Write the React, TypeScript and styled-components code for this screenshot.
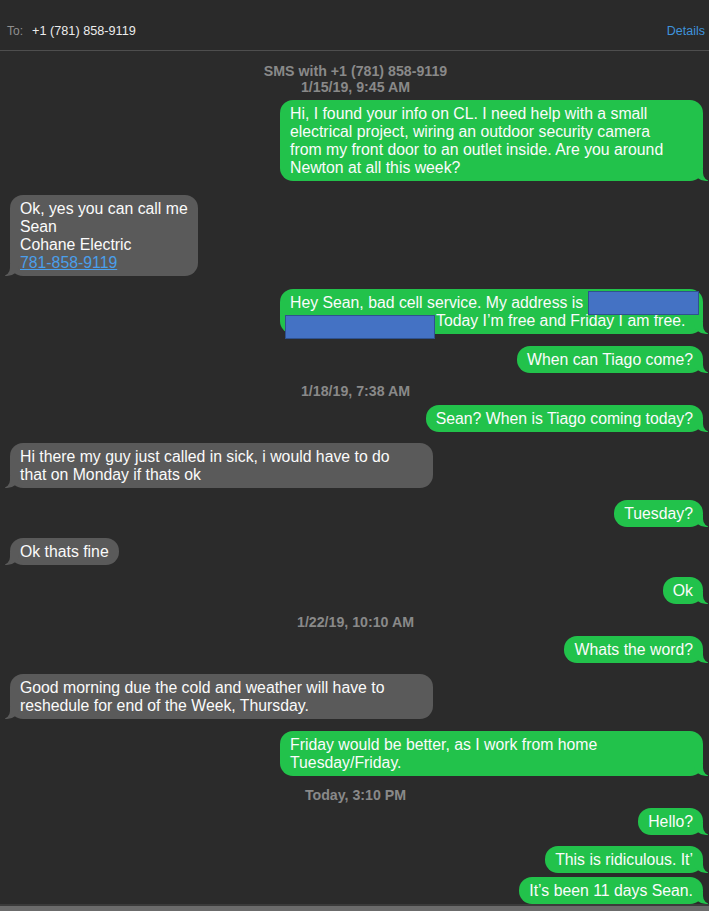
import { Fragment } from 'react';
import styled, { createGlobalStyle, css } from 'styled-components';

const BG = '#2b2b2b';
const GREEN = '#22c24b';
const GREY = '#5a5a5a';

const GlobalStyle = createGlobalStyle`
  html, body {
    margin: 0;
    padding: 0;
    background: ${BG};
  }
  * {
    box-sizing: border-box;
  }
`;

const Window = styled.div`
  width: 709px;
  height: 911px;
  display: flex;
  flex-direction: column;
  background: ${BG};
  font-family: 'Liberation Sans', Arial, sans-serif;
  overflow: hidden;
`;

const Header = styled.div`
  height: 51px;
  flex-shrink: 0;
  display: flex;
  align-items: center;
  padding: 12px 4px 0 7px;
  background: #2a2a2a;
  border-bottom: 1px solid #4e4e4e;
`;

const ToLabel = styled.span`
  font-size: 12px;
  color: #8f8f8f;
  margin-right: 9px;
`;

const ToNumber = styled.span`
  font-size: 12.7px;
  color: #ececec;
`;

const Details = styled.span`
  margin-left: auto;
  font-size: 12.5px;
  color: #3f93db;
`;

const Thread = styled.div`
  flex: 1;
  display: flex;
  flex-direction: column;
  padding: 0 6px 0 10px;
  overflow: hidden;
`;

const Stamp = styled.div<{ $top: number }>`
  margin-top: ${(p) => p.$top}px;
  text-align: center;
  font-size: 14.2px;
  line-height: 16px;
  font-weight: 700;
  color: #898989;
  padding-right: 2px;
  white-space: pre-line;
`;

const Row = styled.div<{ $me?: boolean; $top: number }>`
  margin-top: ${(p) => p.$top}px;
  display: flex;
  justify-content: ${(p) => (p.$me ? 'flex-end' : 'flex-start')};
`;

const Bubble = styled.div<{ $me?: boolean; $wide?: boolean }>`
  position: relative;
  max-width: 423px;
  ${(p) => p.$wide && 'width: 423px;'}
  padding: 5px 10px 4px;
  border-radius: 13px;
  font-size: 15.8px;
  line-height: 18px;
  color: #fbfbfb;
  white-space: pre-line;
  background: ${(p) => (p.$me ? GREEN : GREY)};

  &::before,
  &::after {
    content: '';
    position: absolute;
    bottom: 0;
    height: 12px;
  }

  ${(p) =>
    p.$me
      ? css`
          &::before {
            right: -5px;
            width: 14px;
            background: ${GREEN};
            border-bottom-left-radius: 12px 10px;
          }
          &::after {
            right: -10px;
            width: 10px;
            background: ${BG};
            border-bottom-left-radius: 8px;
          }
        `
      : css`
          &::before {
            left: -5px;
            width: 14px;
            background: ${GREY};
            border-bottom-right-radius: 12px 10px;
          }
          &::after {
            left: -10px;
            width: 10px;
            background: ${BG};
            border-bottom-right-radius: 8px;
          }
        `}
`;

const Link = styled.span`
  color: #4a9feb;
  text-decoration: underline;
`;

/* blue boxes pasted over the address in the screenshot */
const Redact = styled.span<{ $w: number; $m: string }>`
  display: inline-block;
  position: relative;
  z-index: 1;
  width: ${(p) => p.$w}px;
  height: 24px;
  margin: ${(p) => p.$m};
  vertical-align: baseline;
  background: #4472c4;
  border: 1.5px solid #2f528f;
`;

const Bottom = styled.div`
  height: 7px;
  flex-shrink: 0;
  border-top: 2px solid #3b3b3b;
  background: #6b6b6b;
`;

type Msg =
  | { kind: 'stamp'; top: number; text: string }
  | { kind: 'msg'; top: number; me?: boolean; wide?: boolean; text: React.ReactNode };

const messages: Msg[] = [
  { kind: 'stamp', top: 12, text: 'SMS with +1 (781) 858-9119\n1/15/19, 9:45 AM' },
  {
    kind: 'msg',
    top: 5,
    me: true,
    wide: true,
    text: 'Hi, I found your info on CL. I need help with a small\nelectrical project, wiring an outdoor security camera\nfrom my front door to an outlet inside. Are you around\nNewton at all this week?',
  },
  {
    kind: 'msg',
    top: 14,
    text: (
      <>
        {'Ok, yes you can call me\nSean\nCohane Electric\n'}
        <Link>781-858-9119</Link>
      </>
    ),
  },
  {
    kind: 'msg',
    top: 13,
    me: true,
    wide: true,
    text: (
      <>
        {'Hey Sean, bad cell service. My address is '}
        <Redact $w={111} $m="-3px -20px -7px 0" />
        {'\n'}
        <Redact $w={150} $m="0 1px -13px -5px" />
        {'Today I\u2019m free and Friday I am free.'}
      </>
    ),
  },
  { kind: 'msg', top: 12, me: true, text: 'When can Tiago come?' },
  { kind: 'stamp', top: 10, text: '1/18/19, 7:38 AM' },
  { kind: 'msg', top: 6, me: true, text: 'Sean? When is Tiago coming today?' },
  {
    kind: 'msg',
    top: 11,
    wide: true,
    text: 'Hi there my guy just called in sick, i would have to do\nthat on Monday if thats ok',
  },
  { kind: 'msg', top: 12, me: true, text: 'Tuesday?' },
  { kind: 'msg', top: 11, text: 'Ok thats fine' },
  { kind: 'msg', top: 12, me: true, text: 'Ok' },
  { kind: 'stamp', top: 10, text: '1/22/19, 10:10 AM' },
  { kind: 'msg', top: 6, me: true, text: 'Whats the word?' },
  {
    kind: 'msg',
    top: 11,
    wide: true,
    text: 'Good morning due the cold and weather will have to\nreshedule for end of the Week, Thursday.',
  },
  {
    kind: 'msg',
    top: 12,
    me: true,
    wide: true,
    text: 'Friday would be better, as I work from home\nTuesday/Friday.',
  },
  { kind: 'stamp', top: 11, text: 'Today, 3:10 PM' },
  { kind: 'msg', top: 5, me: true, text: 'Hello?' },
  { kind: 'msg', top: 11, me: true, text: 'This is ridiculous. It\u2019' },
  { kind: 'msg', top: 4, me: true, text: 'It\u2019s been 11 days Sean.' },
];

export default function App() {
  return (
    <Window>
      <GlobalStyle />
      <Header>
        <ToLabel>To:</ToLabel>
        <ToNumber>+1 (781) 858-9119</ToNumber>
        <Details>Details</Details>
      </Header>
      <Thread>
        {messages.map((m, i) => (
          <Fragment key={i}>
            {m.kind === 'stamp' ? (
              <Stamp $top={m.top}>{m.text}</Stamp>
            ) : (
              <Row $me={m.me} $top={m.top}>
                <Bubble $me={m.me} $wide={m.wide}>
                  {m.text}
                </Bubble>
              </Row>
            )}
          </Fragment>
        ))}
      </Thread>
      <Bottom />
    </Window>
  );
}
